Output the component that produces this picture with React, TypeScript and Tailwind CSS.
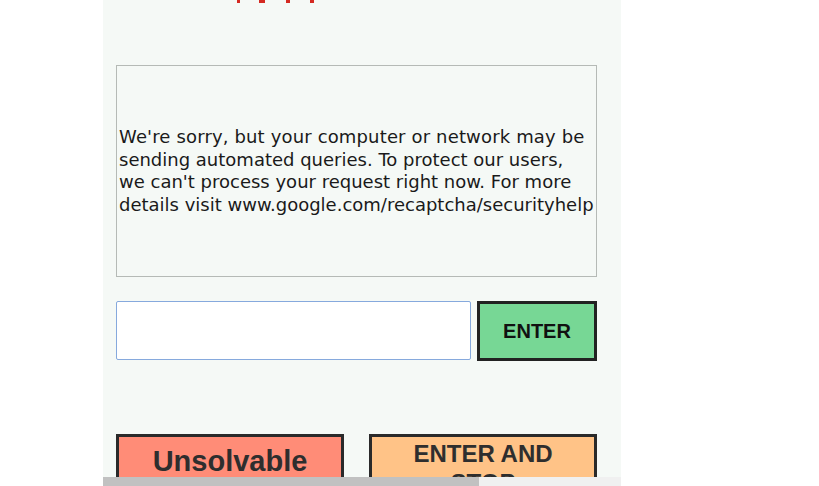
import React from "react";

export default function App() {
  return (
    <div className="w-[819px] h-[486px] bg-white overflow-hidden">
      <div className="ml-[103px] w-[518px] h-[486px] flex flex-col bg-[#f5f9f6]">
        <div className="h-[477px] overflow-hidden pl-[13px] pr-[24px]">
          <div className="flex h-[3px] items-end pl-[121px]">
            <div className="w-[3px] h-[3px] bg-[#d42a22]" />
            <div className="ml-[19px] w-[6px] h-[3px] bg-[#d42a22]" />
            <div className="ml-[21px] w-[4px] h-[3px] bg-[#d42a22]" />
            <div className="ml-[20px] w-[4px] h-[3px] bg-[#d42a22]" />
          </div>
          <div className="mt-[62px] w-[481px] h-[212px] border border-[#b5bab6] flex items-center pl-[2px] pr-0 overflow-hidden">
            <p className="font-['DejaVu_Sans',Verdana,sans-serif] text-[18px] leading-[22.5px] text-[#1a1a1a] whitespace-nowrap">
              <span className="tracking-[0.15px]">We're sorry, but your computer or network may be</span>
              <br />
              sending automated queries. To protect our users,
              <br />
              we can't process your request right now. For more
              <br />
              details visit www.google.com/recaptcha/securityhelp
            </p>
          </div>
          <div className="mt-[24px] flex gap-[6px] w-[481px]">
            <input
              type="text"
              className="w-[355px] h-[59px] bg-white border border-[#86a9dd] rounded-[2px] outline-none"
            />
            <button className="font-['Liberation_Sans',Arial,sans-serif] w-[120px] h-[60px] bg-[#77d795] border-[3px] border-[#222222] font-bold text-[20px] text-[#111]">
              ENTER
            </button>
          </div>
          <div className="mt-[73px] flex gap-[25px] w-[481px]">
            <button className="font-['Liberation_Sans',Arial,sans-serif] w-[228px] h-[80px] bg-[#ff8c77] border-[3px] border-[#2a2a2a] font-bold text-[29px] leading-[32px] text-[#2e2e2e] flex justify-center pt-[8px]">
              Unsolvable
            </button>
            <button className="font-['Liberation_Sans',Arial,sans-serif] w-[228px] h-[80px] bg-[#ffc387] border-[3px] border-[#2a2a2a] font-bold text-[24px] leading-[29px] text-[#2e2e2e] flex flex-col items-center pt-[2px]">
              <span>ENTER AND</span>
              <span>STOP</span>
            </button>
          </div>
        </div>
        <div className="h-[9px] bg-[#f0f0f0] flex">
          <div className="w-[376px] h-full bg-[#c1c1c1]" />
        </div>
      </div>
    </div>
  );
}
